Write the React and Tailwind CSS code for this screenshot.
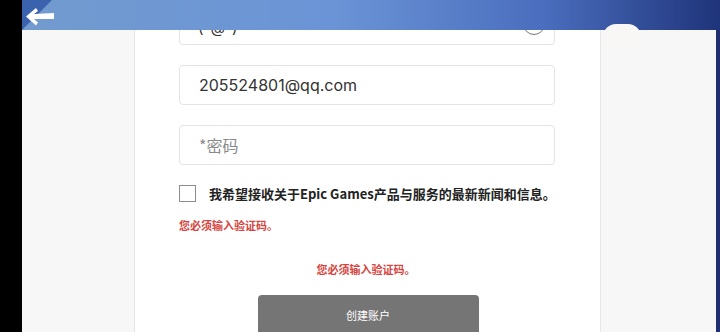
import { useState } from 'react';

const cjk = { fontFamily: '"Noto Sans CJK SC", "Noto Sans", sans-serif' };
const latin = { fontFamily: 'Inter, "Noto Sans CJK SC", sans-serif' };

const Header = () => (
  <div className="absolute top-0 left-[22px] right-0 h-[30px] bg-[linear-gradient(90deg,#729bcf_0%,#6a94d6_45%,#4a6dbd_75%,#1f347a_100%)] overflow-hidden">
    <div className="absolute top-0 left-0 w-[30px] h-[30px] bg-[#3b62ad] [clip-path:polygon(0_0,100%_0,0_100%)]" />
    <svg className="absolute left-[3px] top-[7px]" width="30" height="19" viewBox="0 0 30 19">
      <path d="M1 9.5 L11 1 L13 4 L9 7 L29 6 L29 12 L9 12 L13 15.5 L11 18.5 Z" fill="#fff" />
    </svg>
  </div>
);

export default function App() {
  const [checked, setChecked] = useState(false);

  return (
    <div className="relative w-[720px] h-[332px] overflow-hidden flex bg-black">
      <div className="w-[22px] shrink-0 bg-black" />
      <div className="flex-1 flex">
        <div className="w-[113px] bg-[#f7f7f7] border-r border-[#e6e6e6]" />
        <div className="w-[465px] bg-white pl-[44px] pt-[5px] flex flex-col">
          <div className="w-[376px] h-[40px] rounded-[4px] border border-[#e3e3e3] flex items-end justify-between pl-[18px] pr-[9px] pb-[9px]">
            <span className="text-[15px] text-[#333] leading-none tracking-[7px]" style={latin}>(@)</span>
            <span className="w-[22px] h-[22px] rounded-full border border-[#777]" />
          </div>
          <div className="mt-[20px] w-[376px] h-[40px] rounded-[4px] border border-[#e3e3e3] flex items-center px-[19px]">
            <span className="text-[16px] text-[#333]" style={latin}>205524801@qq.com</span>
          </div>
          <div className="mt-[20px] w-[376px] h-[40px] rounded-[4px] border border-[#e3e3e3] flex items-center px-[19px]">
            <span className="text-[16px] text-[#8a8a8a]" style={cjk}>*密码</span>
          </div>
          <label className="mt-[19px] flex items-center gap-[13px] cursor-pointer">
            <input
              type="checkbox"
              checked={checked}
              onChange={() => setChecked(!checked)}
              className="appearance-none w-[17px] h-[17px] border-[1.5px] border-[#8c8c8c] bg-white m-0"
            />
            <span className="text-[13px] font-bold text-[#222]" style={cjk}>
              我希望接收关于Epic Games产品与服务的最新新闻和信息。
            </span>
          </label>
          <p className="mt-[16px] text-[11px] font-bold text-[#d64541] leading-none" style={cjk}>
            您必须输入验证码。
          </p>
        </div>
        <div className="flex-1 bg-[#f7f7f7] border-l border-[#e6e6e6]" />
        <div className="w-[4px] bg-[#1f2f70]" />
      </div>

      <div className="absolute left-[136px] top-[264px] w-[464px] flex flex-col items-center">
        <p className="text-[11px] font-bold text-[#d64541] leading-none ml-[-4px]" style={cjk}>
          您必须输入验证码。
        </p>
        <button className="mt-[20px] w-[221px] h-[50px] rounded-[4px] bg-[#757575] text-white text-[11px] pb-[9px]" style={cjk}>
          创建账户
        </button>
      </div>

      <Header />
      <div className="absolute left-[603px] top-[24px] w-[38px] h-[26px] rounded-full bg-[#f9f7f6]" />
    </div>
  );
}
